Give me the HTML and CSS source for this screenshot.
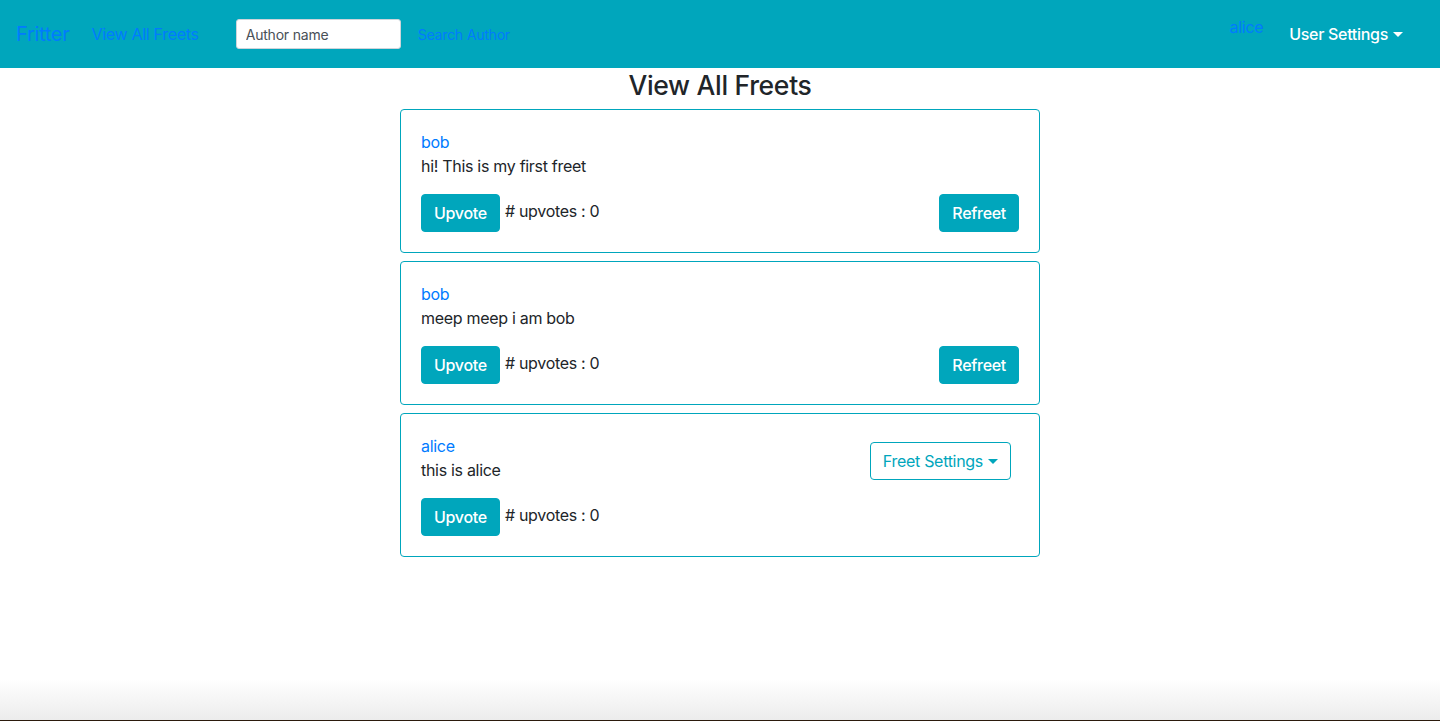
FILE: index.html
```html
<!DOCTYPE html>
<html lang="en">
<head>
<meta charset="utf-8">
<title>Fritter</title>
<link rel="stylesheet" href="styles.css">
</head>
<body>
<nav class="navbar">
  <div class="nav-left">
    <a class="brand" href="#">Fritter</a>
    <a class="nav-link" href="#">View All Freets</a>
    <form class="search">
      <input class="search-input" type="text" placeholder="Author name">
      <a class="search-btn" href="#">Search Author</a>
    </form>
  </div>
  <div class="nav-right">
    <a class="user-link" href="#">alice</a>
    <a class="dropdown-toggle white" href="#">User Settings</a>
  </div>
</nav>
<main class="main">
  <h3 class="title">View All Freets</h3>
  <div class="freets">
    <div class="card">
      <div class="card-top">
        <div>
          <a class="author" href="#">bob</a>
          <p class="content">hi! This is my first freet</p>
        </div>
      </div>
      <div class="actions">
        <div class="vote">
          <button class="btn">Upvote</button>
          <span class="count"># upvotes : 0</span>
        </div>
        <button class="btn">Refreet</button>
      </div>
    </div>
    <div class="card">
      <div class="card-top">
        <div>
          <a class="author" href="#">bob</a>
          <p class="content">meep meep i am bob</p>
        </div>
      </div>
      <div class="actions">
        <div class="vote">
          <button class="btn">Upvote</button>
          <span class="count"># upvotes : 0</span>
        </div>
        <button class="btn">Refreet</button>
      </div>
    </div>
    <div class="card">
      <div class="card-top">
        <div>
          <a class="author" href="#">alice</a>
          <p class="content">this is alice</p>
        </div>
        <button class="btn-outline dropdown-toggle">Freet Settings</button>
      </div>
      <div class="actions">
        <div class="vote">
          <button class="btn">Upvote</button>
          <span class="count"># upvotes : 0</span>
        </div>
      </div>
    </div>
  </div>
</main>
</body>
</html>
```

FILE: styles.css
```css
* { box-sizing: border-box; }
html {
  height: 100%;
  background: linear-gradient(to bottom, #ffffff calc(100% - 42px), #ececec calc(100% - 1px), #2b1a0c calc(100% - 1px));
}
body {
  margin: 0;
  font-family: Inter, "Liberation Sans", sans-serif;
  font-size: 16px;
  line-height: 24px;
  letter-spacing: -0.3px;
  color: #212529;
}
a { text-decoration: none; color: #007bff; }

.navbar {
  height: 68px;
  background: #00a6bc;
  display: flex;
  align-items: center;
  justify-content: space-between;
  padding: 0 16px;
}
.nav-left { display: flex; align-items: center; }
.brand { font-size: 20px; line-height: 30px; margin-right: 14px; }
.nav-link { padding: 8px; font-size: 16px; }
.search { display: flex; align-items: center; margin-left: 29px; }
.search-input {
  width: 165px;
  height: 30px;
  border: 1px solid #ced4da;
  border-radius: 3px;
  padding: 4px 9px;
  font-family: inherit;
  font-size: 14px;
  letter-spacing: -0.2px;
  color: #495057;
  background: #fff;
}
.search-input::placeholder { color: #495057; }
.search-btn { font-size: 14px; margin-left: 17px; padding-top: 2px; letter-spacing: -0.2px; }

.nav-right { display: flex; align-items: center; }
.user-link { font-size: 16px; margin-top: -14px; margin-right: 18px; }
.white { color: #fff; font-size: 16px; font-weight: 500; padding: 8px 0 8px 8px; margin-right: 21px; }
.dropdown-toggle::after {
  content: "";
  display: inline-block;
  margin-left: 5px;
  vertical-align: 3px;
  border-top: 5px solid currentColor;
  border-left: 5px solid transparent;
  border-right: 5px solid transparent;
}

.main { display: flex; flex-direction: column; align-items: center; }
.title {
  margin: 0 0 7px;
  font-size: 26.5px;
  line-height: 34px;
  font-weight: 500;
}
.freets { width: 640px; display: flex; flex-direction: column; gap: 8px; }
.card {
  border: 1px solid #00a6bc;
  border-radius: 4px;
  padding: 20px;
}
.card-top { display: flex; justify-content: space-between; align-items: flex-start; }
.author { display: block; }
.content { margin: 0 0 16px; }
.actions { display: flex; justify-content: space-between; align-items: center; }
.vote { display: flex; align-items: center; }
.count { margin-left: 5px; margin-top: -4px; }
.btn {
  font-family: inherit;
  font-size: 16px;
  font-weight: 500;
  line-height: 24px;
  letter-spacing: -0.3px;
  padding: 6px 12px;
  border: 1px solid #00a6bc;
  background: #00a6bc;
  color: #fff;
  border-radius: 4px;
}
.btn-outline {
  font-family: inherit;
  font-size: 16px;
  line-height: 24px;
  letter-spacing: -0.3px;
  padding: 6px 12px;
  border: 1px solid #00a6bc;
  background: #fff;
  color: #00a6bc;
  border-radius: 4px;
  margin-top: 8px;
  margin-right: 8px;
}
```
